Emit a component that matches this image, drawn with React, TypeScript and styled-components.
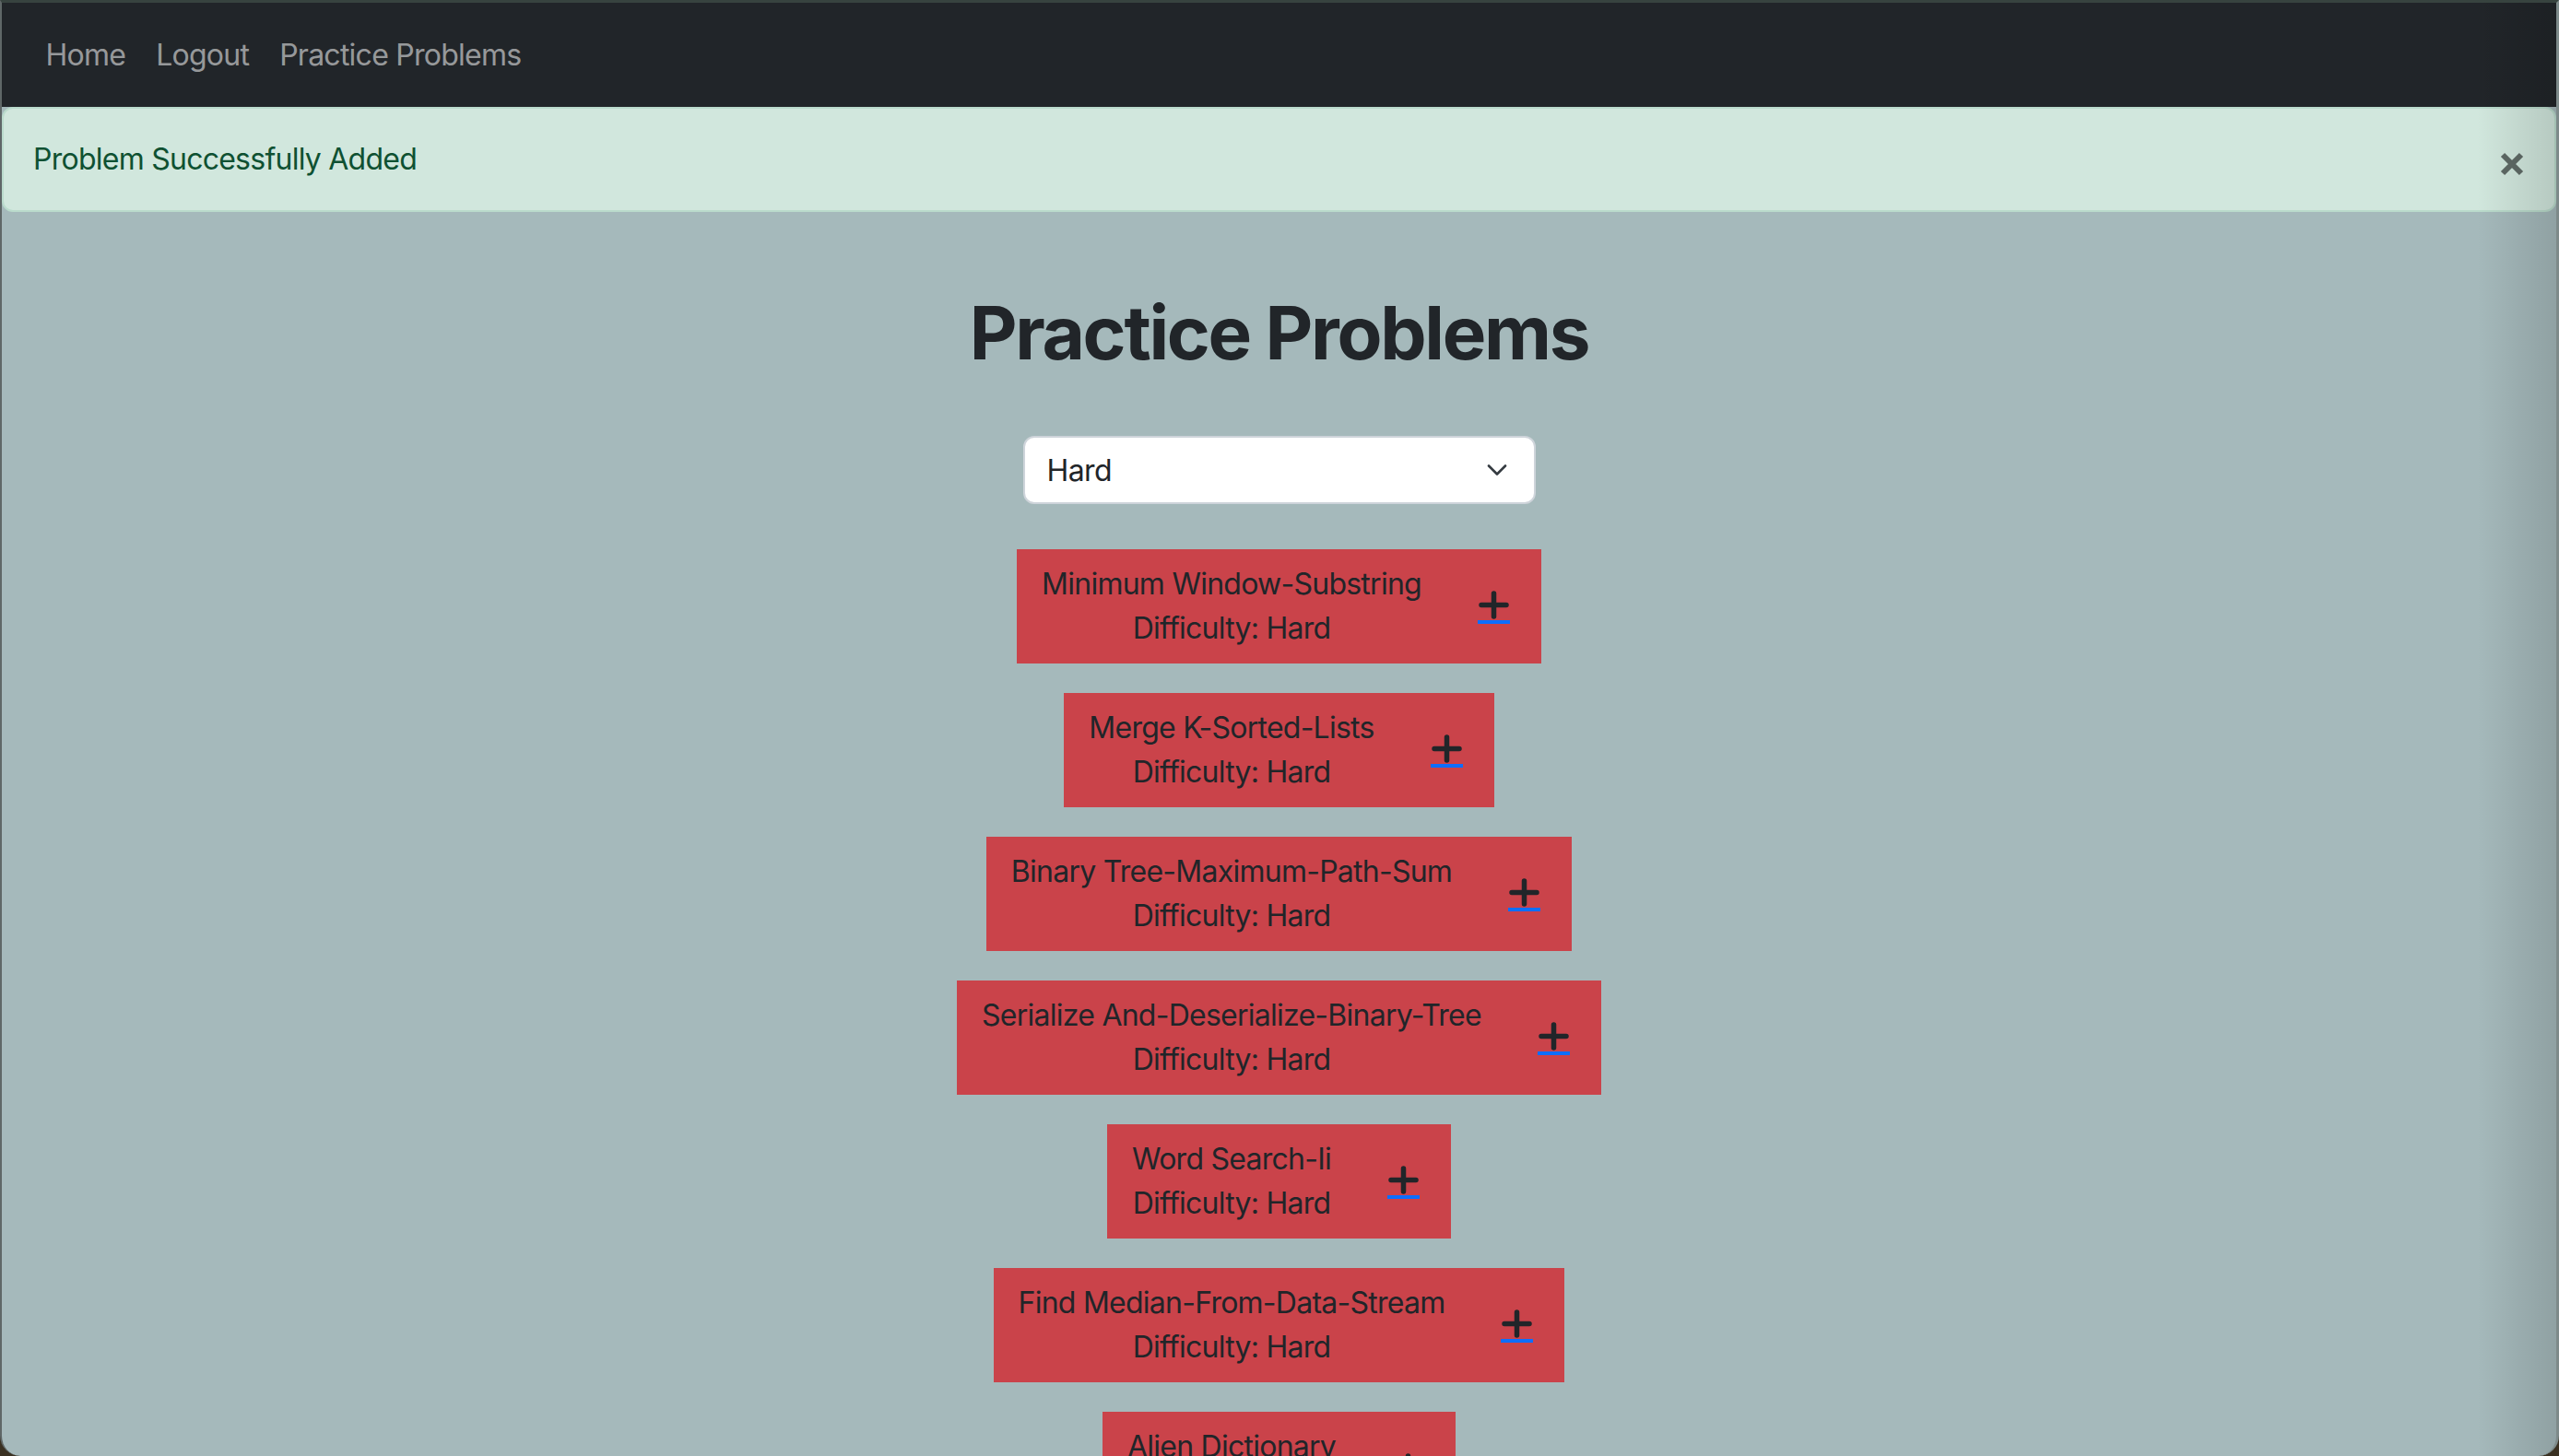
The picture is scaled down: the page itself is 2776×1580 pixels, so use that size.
import React from "react";
import styled, { createGlobalStyle } from "styled-components";

const GlobalStyle = createGlobalStyle`
  html, body {
    margin: 0;
    padding: 0;
    overflow: hidden;
    background: #3a3122;
  }
  body {
    font-family: "Inter", "Liberation Sans", "Noto Sans", sans-serif;
    color: #212529;
    letter-spacing: -0.75px;
    -webkit-font-smoothing: antialiased;
  }
  ::-webkit-scrollbar { display: none; }
`;

const Window = styled.div`
  position: relative;
  box-sizing: border-box;
  height: 1580px;
  overflow: hidden;
  background: #a5b9bb;
  border-top: 3px solid #37433f;
  border-left: 2px solid #5f6767;
  border-right: 3px solid #7d8a8a;
  border-radius: 0 0 22px 22px;
`;

const EdgeShade = styled.div`
  position: absolute;
  top: 0;
  right: 0;
  bottom: 0;
  width: 86px;
  pointer-events: none;
  background: linear-gradient(to right, rgba(0, 0, 0, 0), rgba(0, 0, 0, 0.13));
`;

const Navbar = styled.nav`
  display: flex;
  align-items: center;
  height: 113px;
  padding-left: 31px;
  background: #212529;
`;

const NavLink = styled.a`
  padding: 0 16.5px;
  font-size: 32px;
  line-height: 48px;
  color: rgba(255, 255, 255, 0.55);
  text-decoration: none;
  cursor: pointer;
`;

const Alert = styled.div`
  box-sizing: border-box;
  display: flex;
  align-items: center;
  justify-content: space-between;
  height: 114px;
  padding: 0 32px;
  background: #d1e7dd;
  border: 2px solid #badbcc;
  border-radius: 12px;
  color: #0f5132;
  font-size: 32px;
  line-height: 48px;
`;

const CloseButton = styled.button`
  display: flex;
  align-items: center;
  justify-content: center;
  margin-top: 10px;
  padding: 0;
  border: none;
  background: transparent;
  color: #5f6a66;
  cursor: pointer;
`;

const Main = styled.main`
  display: flex;
  flex-direction: column;
  align-items: center;
`;

const Title = styled.h1`
  margin: 83px 0 0;
  font-size: 80px;
  line-height: 96px;
  font-weight: 700;
  letter-spacing: -2.3px;
  color: #212529;
`;

const SelectWrap = styled.div`
  position: relative;
  margin-top: 64px;
  width: 556px;
`;

const Select = styled.select`
  box-sizing: border-box;
  width: 100%;
  height: 74px;
  padding: 0 70px 0 24px;
  appearance: none;
  -webkit-appearance: none;
  background: #fff;
  border: 2px solid #ced4da;
  border-radius: 12px;
  font-family: inherit;
  font-size: 32px;
  letter-spacing: -0.6px;
  color: #212529;
  outline: none;
`;

const Chevron = styled.svg`
  position: absolute;
  right: 31px;
  top: 50%;
  transform: translateY(-50%);
  pointer-events: none;
`;

const List = styled.div`
  display: flex;
  flex-direction: column;
  align-items: center;
  gap: 32px;
  margin-top: 49px;
`;

const Card = styled.div`
  display: flex;
  align-items: center;
  gap: 61px;
  padding: 14px 34px 14px 27px;
  background: #ca434a;
  color: #212529;
  font-size: 32px;
  line-height: 48px;
`;

const CardText = styled.div`
  text-align: center;
  white-space: nowrap;
`;

const AddLink = styled.a`
  display: inline-flex;
  border-bottom: 4px solid #0d6efd;
  cursor: pointer;
`;

const problems = [
  "Minimum Window-Substring",
  "Merge K-Sorted-Lists",
  "Binary Tree-Maximum-Path-Sum",
  "Serialize And-Deserialize-Binary-Tree",
  "Word Search-Ii",
  "Find Median-From-Data-Stream",
  "Alien Dictionary",
];

const PlusIcon = () => (
  <svg width="35" height="33" viewBox="0 0 35 33" aria-hidden="true">
    <path
      d="M17.5 4 V29 M4 16.5 H31"
      stroke="#212529"
      strokeWidth="5.5"
      strokeLinecap="round"
      fill="none"
    />
  </svg>
);

export default function App() {
  return (
    <>
      <GlobalStyle />
      <Window>
        <Navbar>
          <NavLink>Home</NavLink>
          <NavLink>Logout</NavLink>
          <NavLink>Practice Problems</NavLink>
        </Navbar>
        <Alert>
          <span>Problem Successfully Added</span>
          <CloseButton aria-label="Close">
            <svg width="28" height="28" viewBox="0 0 28 28" aria-hidden="true">
              <path
                d="M4 4 L24 24 M24 4 L4 24"
                stroke="currentColor"
                strokeWidth="6"
                strokeLinecap="butt"
                fill="none"
              />
            </svg>
          </CloseButton>
        </Alert>
        <Main>
          <Title>Practice Problems</Title>
          <SelectWrap>
            <Select defaultValue="Hard">
              <option>Easy</option>
              <option>Medium</option>
              <option>Hard</option>
            </Select>
            <Chevron width="22" height="13" viewBox="0 0 22 13">
              <path
                d="M2 2 L11 11 L20 2"
                stroke="#343a40"
                strokeWidth="2.6"
                strokeLinecap="round"
                strokeLinejoin="round"
                fill="none"
              />
            </Chevron>
          </SelectWrap>
          <List>
            {problems.map((p) => (
              <Card key={p}>
                <CardText>
                  <div>{p}</div>
                  <div>Difficulty: Hard</div>
                </CardText>
                <AddLink>
                  <PlusIcon />
                </AddLink>
              </Card>
            ))}
          </List>
        </Main>
        <EdgeShade />
      </Window>
    </>
  );
}
